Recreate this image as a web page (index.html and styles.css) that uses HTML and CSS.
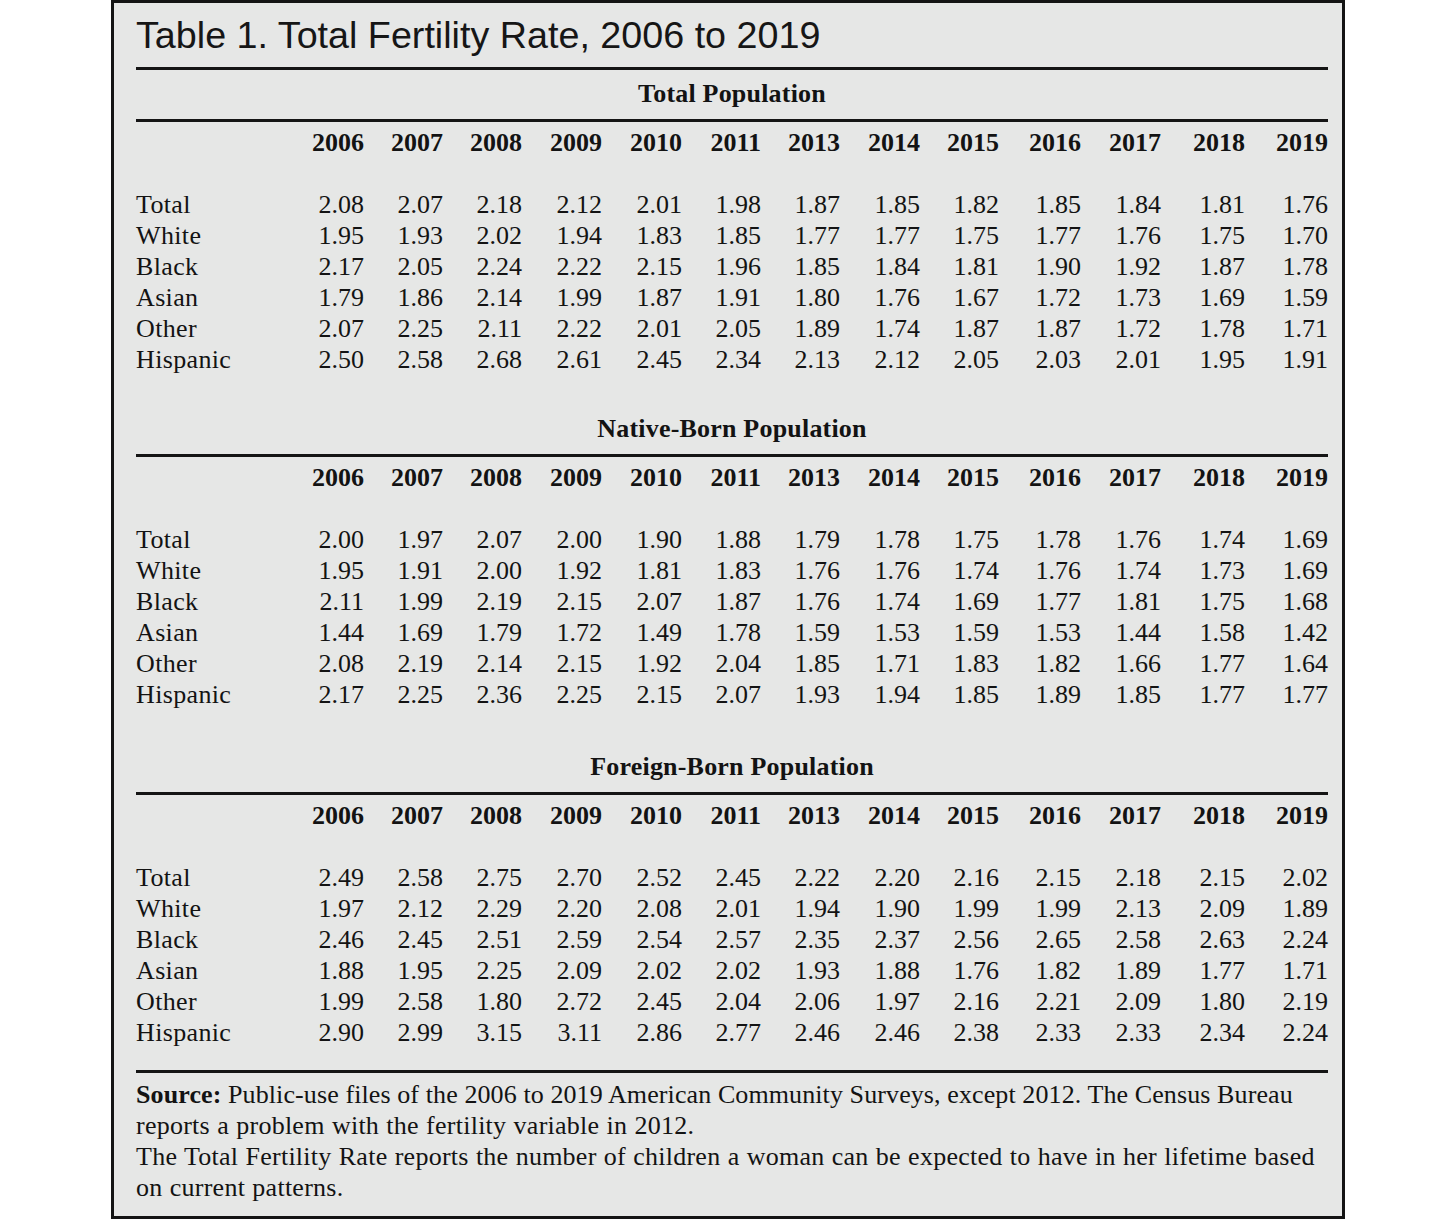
FILE: index.html
```html
<!DOCTYPE html>
<html lang="en">
<head>
<meta charset="utf-8">
<title>Table 1. Total Fertility Rate, 2006 to 2019</title>
<link rel="stylesheet" href="styles.css">
</head>
<body>
<div class="frame">
  <h1 class="title">Table 1. Total Fertility Rate, 2006 to 2019</h1>
  <div class="rule"></div>

  <section class="block">
    <h2 class="block-head">Total Population</h2>
    <div class="rule rule-head"></div>
    <div class="row years"><span></span><span>2006</span><span>2007</span><span>2008</span><span>2009</span><span>2010</span><span>2011</span><span>2013</span><span>2014</span><span>2015</span><span>2016</span><span>2017</span><span>2018</span><span>2019</span></div>
    <div class="data">
      <div class="row"><span>Total</span><span>2.08</span><span>2.07</span><span>2.18</span><span>2.12</span><span>2.01</span><span>1.98</span><span>1.87</span><span>1.85</span><span>1.82</span><span>1.85</span><span>1.84</span><span>1.81</span><span>1.76</span></div>
      <div class="row"><span>White</span><span>1.95</span><span>1.93</span><span>2.02</span><span>1.94</span><span>1.83</span><span>1.85</span><span>1.77</span><span>1.77</span><span>1.75</span><span>1.77</span><span>1.76</span><span>1.75</span><span>1.70</span></div>
      <div class="row"><span>Black</span><span>2.17</span><span>2.05</span><span>2.24</span><span>2.22</span><span>2.15</span><span>1.96</span><span>1.85</span><span>1.84</span><span>1.81</span><span>1.90</span><span>1.92</span><span>1.87</span><span>1.78</span></div>
      <div class="row"><span>Asian</span><span>1.79</span><span>1.86</span><span>2.14</span><span>1.99</span><span>1.87</span><span>1.91</span><span>1.80</span><span>1.76</span><span>1.67</span><span>1.72</span><span>1.73</span><span>1.69</span><span>1.59</span></div>
      <div class="row"><span>Other</span><span>2.07</span><span>2.25</span><span>2.11</span><span>2.22</span><span>2.01</span><span>2.05</span><span>1.89</span><span>1.74</span><span>1.87</span><span>1.87</span><span>1.72</span><span>1.78</span><span>1.71</span></div>
      <div class="row"><span>Hispanic</span><span>2.50</span><span>2.58</span><span>2.68</span><span>2.61</span><span>2.45</span><span>2.34</span><span>2.13</span><span>2.12</span><span>2.05</span><span>2.03</span><span>2.01</span><span>1.95</span><span>1.91</span></div>
    </div>
  </section>

  <section class="block block-2">
    <h2 class="block-head">Native-Born Population</h2>
    <div class="rule rule-head"></div>
    <div class="row years"><span></span><span>2006</span><span>2007</span><span>2008</span><span>2009</span><span>2010</span><span>2011</span><span>2013</span><span>2014</span><span>2015</span><span>2016</span><span>2017</span><span>2018</span><span>2019</span></div>
    <div class="data">
      <div class="row"><span>Total</span><span>2.00</span><span>1.97</span><span>2.07</span><span>2.00</span><span>1.90</span><span>1.88</span><span>1.79</span><span>1.78</span><span>1.75</span><span>1.78</span><span>1.76</span><span>1.74</span><span>1.69</span></div>
      <div class="row"><span>White</span><span>1.95</span><span>1.91</span><span>2.00</span><span>1.92</span><span>1.81</span><span>1.83</span><span>1.76</span><span>1.76</span><span>1.74</span><span>1.76</span><span>1.74</span><span>1.73</span><span>1.69</span></div>
      <div class="row"><span>Black</span><span>2.11</span><span>1.99</span><span>2.19</span><span>2.15</span><span>2.07</span><span>1.87</span><span>1.76</span><span>1.74</span><span>1.69</span><span>1.77</span><span>1.81</span><span>1.75</span><span>1.68</span></div>
      <div class="row"><span>Asian</span><span>1.44</span><span>1.69</span><span>1.79</span><span>1.72</span><span>1.49</span><span>1.78</span><span>1.59</span><span>1.53</span><span>1.59</span><span>1.53</span><span>1.44</span><span>1.58</span><span>1.42</span></div>
      <div class="row"><span>Other</span><span>2.08</span><span>2.19</span><span>2.14</span><span>2.15</span><span>1.92</span><span>2.04</span><span>1.85</span><span>1.71</span><span>1.83</span><span>1.82</span><span>1.66</span><span>1.77</span><span>1.64</span></div>
      <div class="row"><span>Hispanic</span><span>2.17</span><span>2.25</span><span>2.36</span><span>2.25</span><span>2.15</span><span>2.07</span><span>1.93</span><span>1.94</span><span>1.85</span><span>1.89</span><span>1.85</span><span>1.77</span><span>1.77</span></div>
    </div>
  </section>

  <section class="block block-3">
    <h2 class="block-head">Foreign-Born Population</h2>
    <div class="rule rule-head"></div>
    <div class="row years"><span></span><span>2006</span><span>2007</span><span>2008</span><span>2009</span><span>2010</span><span>2011</span><span>2013</span><span>2014</span><span>2015</span><span>2016</span><span>2017</span><span>2018</span><span>2019</span></div>
    <div class="data">
      <div class="row"><span>Total</span><span>2.49</span><span>2.58</span><span>2.75</span><span>2.70</span><span>2.52</span><span>2.45</span><span>2.22</span><span>2.20</span><span>2.16</span><span>2.15</span><span>2.18</span><span>2.15</span><span>2.02</span></div>
      <div class="row"><span>White</span><span>1.97</span><span>2.12</span><span>2.29</span><span>2.20</span><span>2.08</span><span>2.01</span><span>1.94</span><span>1.90</span><span>1.99</span><span>1.99</span><span>2.13</span><span>2.09</span><span>1.89</span></div>
      <div class="row"><span>Black</span><span>2.46</span><span>2.45</span><span>2.51</span><span>2.59</span><span>2.54</span><span>2.57</span><span>2.35</span><span>2.37</span><span>2.56</span><span>2.65</span><span>2.58</span><span>2.63</span><span>2.24</span></div>
      <div class="row"><span>Asian</span><span>1.88</span><span>1.95</span><span>2.25</span><span>2.09</span><span>2.02</span><span>2.02</span><span>1.93</span><span>1.88</span><span>1.76</span><span>1.82</span><span>1.89</span><span>1.77</span><span>1.71</span></div>
      <div class="row"><span>Other</span><span>1.99</span><span>2.58</span><span>1.80</span><span>2.72</span><span>2.45</span><span>2.04</span><span>2.06</span><span>1.97</span><span>2.16</span><span>2.21</span><span>2.09</span><span>1.80</span><span>2.19</span></div>
      <div class="row"><span>Hispanic</span><span>2.90</span><span>2.99</span><span>3.15</span><span>3.11</span><span>2.86</span><span>2.77</span><span>2.46</span><span>2.46</span><span>2.38</span><span>2.33</span><span>2.33</span><span>2.34</span><span>2.24</span></div>
    </div>
  </section>

  <div class="rule rule-foot"></div>
  <p class="note"><span class="note-lead"><b>Source:</b> Public-use files of the 2006 to 2019 American Community Surveys, except 2012. The Census Bureau</span><br>reports a problem with the fertility variable in 2012.<br>The Total Fertility Rate reports the number of children a woman can be expected to have in her lifetime based<br>on current patterns.</p>
</div>
</body>
</html>
```

FILE: styles.css
```css
html, body {
  margin: 0;
  padding: 0;
  background: #ffffff;
}

.frame {
  box-sizing: border-box;
  width: 1234px;
  height: 1219px;
  margin-left: 111px;
  border: 3px solid #141414;
  background: #e6e7e6;
  padding: 10px 14px 13px 22px;
  color: #131313;
  font-family: "Liberation Serif", "Times New Roman", serif;
}

.title {
  margin: 0;
  font-family: "Liberation Sans", Arial, sans-serif;
  font-weight: normal;
  font-size: 37.7px;
  line-height: 44px;
  color: #161616;
}

.rule {
  height: 0;
  border-top: 3px solid #151515;
  margin-top: 10px;
}

.block-head {
  margin: 8px 0 0;
  text-align: center;
  font-size: 26px;
  line-height: 31px;
  font-weight: bold;
  letter-spacing: 0.2px;
}

.block-2 {
  margin-top: 38px;
}

.block-3 {
  margin-top: 41px;
}

.row {
  display: grid;
  grid-template-columns: 148px 80px 79px 79px 80px 80px 79px 79px 80px 79px 82px 80px 84px 83px;
  font-size: 26px;
  line-height: 31px;
}

.row span {
  text-align: right;
}

.row span:first-child {
  text-align: left;
  letter-spacing: 0.35px;
}

.years {
  margin-top: 5px;
  font-weight: bold;
}

.data {
  margin-top: 31px;
}

.rule-foot {
  margin-top: 22px;
}

.note {
  margin: 6px 0 0;
  font-size: 26px;
  line-height: 31px;
  letter-spacing: 0.25px;
  word-spacing: 0.5px;
  white-space: nowrap;
}

.note-lead {
  letter-spacing: 0.1px;
  word-spacing: 0;
}
```
